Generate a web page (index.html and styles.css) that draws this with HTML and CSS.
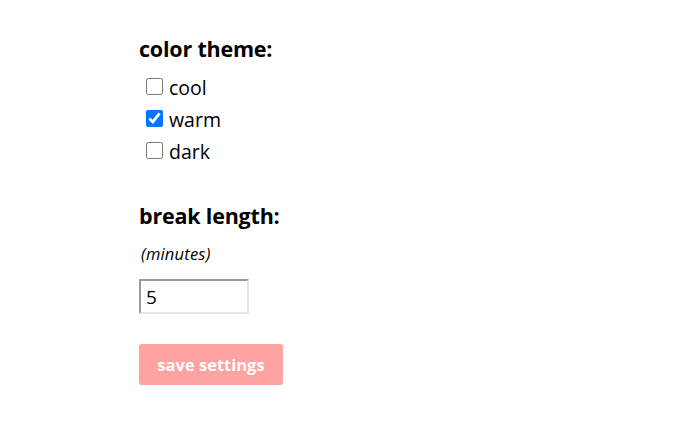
FILE: index.html
```html
<!DOCTYPE html>
<html>
<head>
<meta charset="utf-8">
<link rel="stylesheet" href="styles.css">
</head>
<body>
<form class="settings">
  <section class="group">
    <h2 class="title">color theme:</h2>
    <label class="option"><input type="checkbox" class="check"> cool</label>
    <label class="option"><input type="checkbox" class="check" checked> warm</label>
    <label class="option"><input type="checkbox" class="check"> dark</label>
  </section>
  <section class="group group-break">
    <h2 class="title">break length:</h2>
    <p class="note">(minutes)</p>
    <input type="text" class="num" value="5">
  </section>
  <button type="button" class="save">save settings</button>
</form>
</body>
</html>
```
FILE: styles.css
```css
html, body {
  margin: 0;
  background: #fff;
}
body {
  font-family: "Open Sans", Lato, sans-serif;
  color: #000;
}
.settings {
  padding: 35px 0 0 139px;
  display: flex;
  flex-direction: column;
  align-items: flex-start;
}
.group {
  display: flex;
  flex-direction: column;
  align-items: flex-start;
}
.title {
  margin: 0 0 8px 0;
  font-size: 21.5px;
  font-weight: 700;
  line-height: 28px;
  letter-spacing: -0.2px;
}
.option {
  box-sizing: border-box;
  display: flex;
  align-items: center;
  gap: 6px;
  font-size: 19.5px;
  line-height: 30px;
  height: 32px;
  padding-left: 7px;
  padding-top: 2px;
}
.check {
  width: 17px;
  height: 17px;
  margin: 0 0 3px 0;
  accent-color: #0075ff;
}
.group-break {
  margin-top: 35px;
}
.note {
  margin: 5px 0 14px 2px;
  font-style: italic;
  font-size: 16.5px;
  line-height: 22px;
  letter-spacing: 0.2px;
}
.num {
  width: 110px;
  height: 35px;
  box-sizing: border-box;
  border-style: solid;
  border-width: 2px;
  border-color: #9a9a9a #e6e6e6 #e6e6e6 #9a9a9a;
  font-family: inherit;
  font-size: 19px;
  padding: 2px 5px;
  margin: 0;
  color: #000;
}
.save {
  margin-top: 30px;
  width: 144px;
  height: 41px;
  background: #ffa2a2;
  color: #fff;
  border: none;
  border-radius: 3px;
  font-family: inherit;
  font-weight: 700;
  font-size: 16.5px;
  padding: 0;
}
```
